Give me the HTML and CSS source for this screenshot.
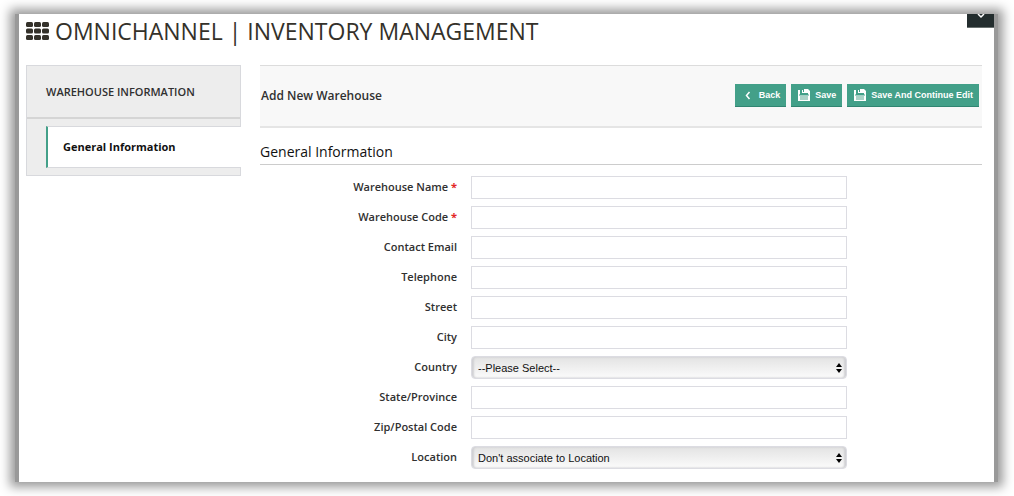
FILE: index.html
```html
<!DOCTYPE html>
<html lang="en">
<head>
<meta charset="utf-8">
<title>Omnichannel | Inventory Management</title>
<link rel="stylesheet" href="styles.css">
</head>
<body>
<svg class="sprite" aria-hidden="true">
  <symbol id="disk" viewBox="0 0 12 12">
    <path fill="#fff" d="M0 1h2v5h8V4H4V1h1v2h1V1h1V0h3l2 2v10H0z"/>
    <path fill="#fff" d="M6 0h4v4H6z"/>
    <path fill="#abd3c8" d="M2 7h8v4H2z"/>
    <path fill="#43a089" d="M1 5.500h10v1H1z"/>
  </symbol>
  <symbol id="updown" viewBox="0 0 6 10">
    <path d="M3 0l3 4H0zM0 6h6l-3 4z"/>
  </symbol>
</svg>
<div class="window">
  <div class="page">
    <button class="menu-toggle" type="button" aria-label="Toggle menu">
      <svg width="8" height="5" viewBox="0 0 8 5"><path d="M1 0l3 3 3-3" fill="none" stroke="#fff" stroke-width="1.500"/></svg>
    </button>
    <header class="title-bar">
      <svg class="grid-icon" width="24" height="18" viewBox="0 0 24 18" fill="#34312a" aria-hidden="true">
        <rect x="0" y="0" width="7" height="5" rx="1.500"/><rect x="8" y="0" width="7" height="5" rx="1.500"/><rect x="16" y="0" width="7" height="5" rx="1.500"/>
        <rect x="0" y="6.500" width="7" height="5" rx="1.500"/><rect x="8" y="6.500" width="7" height="5" rx="1.500"/><rect x="16" y="6.500" width="7" height="5" rx="1.500"/>
        <rect x="0" y="13" width="7" height="5" rx="1.500"/><rect x="8" y="13" width="7" height="5" rx="1.500"/><rect x="16" y="13" width="7" height="5" rx="1.500"/>
      </svg>
      <h1>OMNICHANNEL | INVENTORY MANAGEMENT</h1>
    </header>
    <div class="columns">
      <nav class="sidebar">
        <h2>WAREHOUSE INFORMATION</h2>
        <a class="tab" href="#general">General Information</a>
      </nav>
      <main class="content">
        <div class="toolbar">
          <h2>Add New Warehouse</h2>
          <div class="actions">
            <button class="btn btn-back" type="button"><svg width="12" height="12" viewBox="0 0 12 12"><path d="M7.500 3L4.500 6.500l3 3.500" fill="none" stroke="#fff" stroke-width="1.500"/></svg>Back</button>
            <button class="btn" type="button"><svg width="12" height="12"><use href="#disk"/></svg>Save</button>
            <button class="btn" type="submit" form="general"><svg width="12" height="12"><use href="#disk"/></svg>Save And Continue Edit</button>
          </div>
        </div>
        <h3>General Information</h3>
        <form class="fields" id="general">
          <label for="name">Warehouse Name <span class="req">*</span></label><input id="name" type="text">
          <label for="code">Warehouse Code <span class="req">*</span></label><input id="code" type="text">
          <label for="email">Contact Email</label><input id="email" type="text">
          <label for="phone">Telephone</label><input id="phone" type="text">
          <label for="street">Street</label><input id="street" type="text">
          <label for="city">City</label><input id="city" type="text">
          <label for="country">Country</label>
          <div class="select">
            <select id="country"><option>--Please Select--</option></select>
            <svg width="6" height="10" aria-hidden="true"><use href="#updown"/></svg>
          </div>
          <label for="state">State/Province</label><input id="state" type="text">
          <label for="zip">Zip/Postal Code</label><input id="zip" type="text">
          <label for="location">Location</label>
          <div class="select">
            <select id="location"><option>Don't associate to Location</option></select>
            <svg width="6" height="10" aria-hidden="true"><use href="#updown"/></svg>
          </div>
        </form>
      </main>
    </div>
  </div>
</div>
</body>
</html>
```

FILE: styles.css
```css
* { box-sizing: border-box; }

body {
  margin: 0;
  padding: 14px 20px 14px 19px;
  background: #fff;
  color: #303030;
  font-family: "Open Sans", "Noto Sans", sans-serif;
}

h1, h2, h3 { margin: 0; }

.sprite { position: absolute; width: 0; height: 0; }

.window { position: relative; }

/* soft frame, wider at the sides than at the top and bottom */
.window::before {
  content: "";
  position: absolute;
  inset: 0 -4px;
  background: #999;
  box-shadow: 0 0 10px 5px #999;
}

.page {
  position: relative;
  padding: 0 12px 13px 7px;
  background: #fff;
}

.menu-toggle {
  position: absolute;
  top: 0;
  right: 0;
  display: flex;
  justify-content: center;
  width: 27px;
  height: 14px;
  padding: 0;
  border: 0;
  border-bottom: 1px solid #68706f;
  background: #232d2e;
}

.title-bar {
  display: flex;
  align-items: center;
  gap: 5px;
  height: 34px;
}

.title-bar h1 {
  color: #34312a;
  font-size: 23px;
  font-weight: 400;
  line-height: 34px;
  white-space: nowrap;
}

.columns {
  display: flex;
  align-items: flex-start;
  gap: 19px;
  padding-top: 17px;
}

.sidebar {
  flex: 0 0 215px;
  padding-bottom: 7px;
  border: 1px solid #d8d9dd;
  background: #ededed;
}

.sidebar h2 {
  padding: 0 19px;
  border-bottom: 2px solid #d5d5d5;
  font-size: 11px;
  font-weight: 600;
  line-height: 51px;
}

.tab {
  display: block;
  margin: 7px -1px 0 19px;
  padding-left: 15px;
  border: 1px solid #d8d9dd;
  border-width: 1px 0;
  border-left: 2px solid #43a089;
  background: #fff;
  color: #111;
  font-size: 11px;
  font-weight: 700;
  line-height: 40px;
  text-decoration: none;
}

.content { flex: 1; min-width: 0; }

.toolbar {
  display: flex;
  align-items: center;
  justify-content: space-between;
  height: 63px;
  padding: 0 3px 2px 1px;
  border-top: 1px solid #dcdcdc;
  border-bottom: 2px solid #e5e5e5;
  background: #f8f8f8;
}

.toolbar h2 { font-size: 12px; font-weight: 600; }

.actions { display: flex; gap: 5px; }

.btn {
  display: flex;
  align-items: center;
  gap: 5px;
  height: 23px;
  padding: 0 6px 0 7px;
  border: 0;
  border-bottom: 1px solid #318572;
  background: #43a089;
  color: #fff;
  font-family: "Liberation Sans", Arial, sans-serif;
  font-size: 9px;
  font-weight: 700;
}

.content h3 {
  padding-top: 12px;
  border-bottom: 1px solid #ccc;
  color: #111;
  font-size: 14px;
  font-weight: 400;
  line-height: 24px;
}

.fields {
  display: grid;
  grid-template-columns: 197px minmax(0, 376px);
  grid-auto-rows: 23px;
  column-gap: 14px;
  row-gap: 7px;
  padding-top: 11px;
}

.fields label {
  font-size: 11px;
  font-weight: 600;
  line-height: 21px;
  text-align: right;
}

.req { color: #e22626; font-weight: 700; }

.fields input,
.fields select {
  display: block;
  width: 100%;
  height: 23px;
  padding: 0 6px;
  border: 1px solid #dcdce2;
  background: #fff;
  color: #111;
  font-family: "Liberation Sans", Arial, sans-serif;
  font-size: 11px;
}

.select { position: relative; }

.select svg {
  position: absolute;
  top: 7px;
  right: 5px;
  pointer-events: none;
}

.fields select {
  appearance: none;
  border-radius: 4px;
  background: linear-gradient(#e3e3e3, #fbfbfb);
  box-shadow: inset 2px 0 2px #d0d0d3, inset -2px 0 2px #d0d0d3;
}
```
